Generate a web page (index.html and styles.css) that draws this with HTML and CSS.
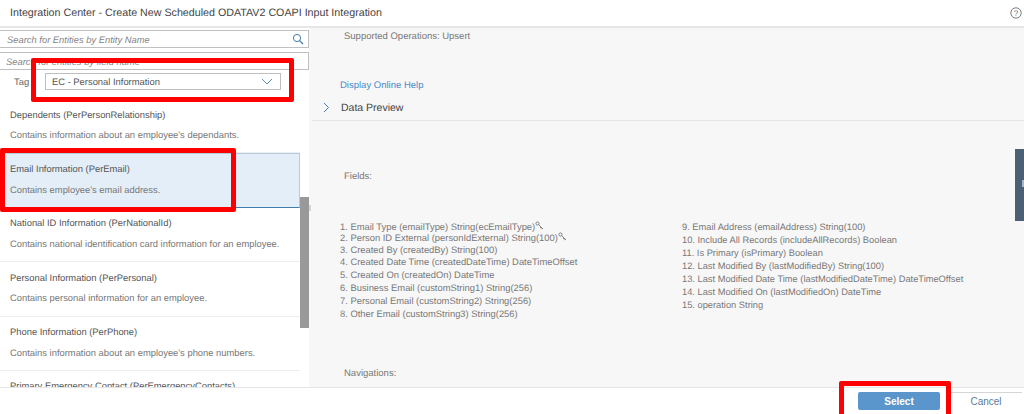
FILE: index.html
```html
<!DOCTYPE html>
<html lang="en">
<head>
<meta charset="utf-8">
<title>Integration Center</title>
<link rel="stylesheet" href="styles.css">
</head>
<body>
<div class="dialog">
  <header class="head">
    <h1 class="title">Integration Center - Create New Scheduled ODATAV2 COAPI Input Integration</h1>
    <svg class="help" width="12" height="12" viewBox="0 0 12 12"><circle cx="6" cy="6" r="5.2" fill="none" stroke="#6a6d70" stroke-width="0.9"/><text x="6" y="8.8" text-anchor="middle" class="help-q">?</text></svg>
  </header>
  <main class="body">
    <aside class="left">
      <div class="search first"><span>Search for Entities by Entity Name</span>
        <svg width="12" height="12" viewBox="0 0 12 12"><circle cx="5" cy="5" r="3.6" fill="none" stroke="#427cac" stroke-width="1"/><path d="M7.6 7.6L11 11" stroke="#427cac" stroke-width="1.3"/></svg>
      </div>
      <div class="search second"><span>Search for entities by field name</span></div>
      <div class="tagrow">
        <label class="tag">Tag</label>
        <div class="select"><span>EC - Personal Information</span>
          <svg width="12" height="7" viewBox="0 0 12 7"><path d="M1 1l5 5 5-5" fill="none" stroke="#427cac" stroke-width="0.9"/></svg>
        </div>
      </div>
      <ul class="list">
        <li class="item"><b>Dependents (PerPersonRelationship)</b><p>Contains information about an employee's dependants.</p></li>
        <li class="item selected"><b>Email Information (PerEmail)</b><p>Contains employee's email address.</p></li>
        <li class="item"><b>National ID Information (PerNationalId)</b><p>Contains national identification card information for an employee.</p></li>
        <li class="item"><b>Personal Information (PerPersonal)</b><p>Contains personal information for an employee.</p></li>
        <li class="item"><b>Phone Information (PerPhone)</b><p>Contains information about an employee's phone numbers.</p></li>
        <li class="item"><b>Primary Emergency Contact (PerEmergencyContacts)</b></li>
      </ul>
      <div class="scrollbar"></div>
    </aside>
    <div class="splitter"></div>
    <section class="right">
      <p class="ops">Supported Operations: Upsert</p>
      <a class="link">Display Online Help</a>
      <div class="preview">
        <svg width="7" height="11" viewBox="0 0 7 11"><path d="M1 1l4.5 4.5L1 10" fill="none" stroke="#427cac" stroke-width="1"/></svg>
        <span>Data Preview</span>
      </div>
      <p class="label fields-label">Fields:</p>
      <div class="fields">
        <ol class="col">
          <li class="tight">1. Email Type (emailType) String(ecEmailType)<svg class="key" width="9" height="9" viewBox="0 0 9 9"><circle cx="2.5" cy="2.5" r="1.6" fill="none" stroke="#777" stroke-width="0.9"/><path d="M3.7 3.7L8 8M6 6l-1 1M7.2 7.2l-1 1" stroke="#777" stroke-width="0.9"/></svg></li>
          <li class="tight">2. Person ID External (personIdExternal) String(100)<svg class="key" width="9" height="9" viewBox="0 0 9 9"><circle cx="2.5" cy="2.5" r="1.6" fill="none" stroke="#777" stroke-width="0.9"/><path d="M3.7 3.7L8 8M6 6l-1 1M7.2 7.2l-1 1" stroke="#777" stroke-width="0.9"/></svg></li>
          <li class="tight">3. Created By (createdBy) String(100)</li>
          <li>4. Created Date Time (createdDateTime) DateTimeOffset</li>
          <li>5. Created On (createdOn) DateTime</li>
          <li>6. Business Email (customString1) String(256)</li>
          <li>7. Personal Email (customString2) String(256)</li>
          <li>8. Other Email (customString3) String(256)</li>
        </ol>
        <ol class="col col-two">
          <li>9. Email Address (emailAddress) String(100)</li>
          <li>10. Include All Records (includeAllRecords) Boolean</li>
          <li>11. Is Primary (isPrimary) Boolean</li>
          <li>12. Last Modified By (lastModifiedBy) String(100)</li>
          <li>13. Last Modified Date Time (lastModifiedDateTime) DateTimeOffset</li>
          <li>14. Last Modified On (lastModifiedOn) DateTime</li>
          <li>15. operation String</li>
        </ol>
      </div>
      <p class="label nav-label">Navigations:</p>
      <div class="side-tab"></div>
    </section>
  </main>
  <footer class="foot">
    <button class="btn primary">Select</button>
    <button class="btn cancel">Cancel</button>
  </footer>
  <div class="mark mark-tag"></div>
  <div class="mark mark-item"></div>
  <div class="mark mark-select"></div>
</div>
</body>
</html>
```
FILE: styles.css
```css
* { box-sizing: border-box; margin: 0; padding: 0; }
html, body { width: 1024px; height: 414px; overflow: hidden; background: #fff; }
body { font-family: "Liberation Sans", Arial, sans-serif; font-size: 10px; color: #666; text-rendering: geometricPrecision; }
.dialog { position: relative; width: 1024px; height: 414px; display: flex; flex-direction: column; }
.head { height: 28px; flex: none; display: flex; align-items: center; justify-content: space-between; padding: 0 2px 0 10px; border-bottom: 2px solid #e6e6e6; }
.title { font-size: 10.7px; font-weight: 400; color: #444; }
.help { display: block; }
.help-q { font-size: 8px; fill: #6a6d70; font-family: "Liberation Sans", sans-serif; }
.body { flex: none; height: 359px; display: flex; overflow: hidden; background: #f7f7f7; }
.left { position: relative; width: 309px; flex: none; background: #fff; display: flex; flex-direction: column; }
.search { height: 18px; border: 1px solid #c0c0c0; border-left: 0; background: #fff; display: flex; align-items: center; justify-content: space-between; padding: 0 4px 0 7px; font-style: italic; color: #858585; font-size: 9.4px; }
.search.first { margin-top: 2px; }
.search.second { margin-top: 4px; padding-left: 6px; }
.tagrow { height: 33px; display: flex; align-items: center; margin-top: -4px; padding: 0 0 2px 14px; }
.tag { width: 31px; font-size: 9.4px; color: #666; }
.select { width: 236px; height: 17px; border: 1px solid #bfbfbf; display: flex; align-items: center; justify-content: space-between; padding: 0 7px 0 6px; color: #555; font-size: 9.4px; }
.list { list-style: none; width: 300px; flex: 1; overflow: hidden; }
.item { height: 54.4px; padding: 9.5px 0 0 10px; border-bottom: 1px solid #eee; }
.item b { display: block; font-weight: 400; font-size: 9.4px; line-height: 12px; color: #555; }
.item p { font-size: 9.4px; line-height: 12px; margin-top: 8.5px; color: #777; }
.item.selected { background: #e3eef8; border: 1px solid #b5cadd; border-bottom-color: #427cac; padding: 9px 0 0 9px; }
.scrollbar { position: absolute; left: 300px; top: 169px; width: 9px; height: 131px; background: #999; }
.splitter { position: relative; width: 3px; flex: none; background: #f7f7f7; }
.splitter::after { content: ""; position: absolute; left: 0; top: 177px; width: 2px; height: 6px; background: #d6d6d6; }
.right { position: relative; flex: 1; padding-left: 28px; }
.ops { margin: 3px 0 0 4px; font-size: 9.5px; line-height: 12px; color: #777; }
.link { display: block; margin-top: 37px; font-size: 9.5px; line-height: 12px; color: #4a8bc9; }
.preview { display: flex; align-items: center; margin: 5px 0 0 -28px; padding: 0 0 2px 11px; height: 24px; border-bottom: 1px solid #e5e5e5; gap: 11px; font-size: 10.5px; color: #444; }
.label { margin-left: 4px; font-size: 9.5px; line-height: 12px; color: #777; }
.fields-label { margin-top: 50px; }
.fields { display: flex; margin-top: 37.5px; }
.col { list-style: none; width: 342px; font-size: 9.4px; color: #777; }
.col-two { font-size: 9.3px; }
.col li { display: flex; height: 13px; line-height: 13px; white-space: nowrap; }
.col li.tight { height: 11.6px; line-height: 12px; }
.key { flex: none; }
.nav-label { margin-top: 47.5px; }
.side-tab { position: absolute; left: 703px; top: 121px; width: 9px; height: 72px; background: #4b6074; }
.side-tab::after { content: ""; position: absolute; left: 7px; top: 31px; width: 2px; height: 7px; background: #a9b6c2; }
.foot { flex: 1; border-top: 1px solid #e5e5e5; display: flex; align-items: flex-end; background: #fff; padding-left: 858px; padding-bottom: 4px; }
.btn { font-family: "Liberation Sans", Arial, sans-serif; font-size: 10px; border: 0; height: 18px; }
.primary { width: 82px; background: #5a96cb; color: #fff; font-weight: 700; border-radius: 2px; }
.cancel { width: 72px; margin-left: 10px; background: #fff; color: #5a7a98; border-top: 1px solid #d5d5d5; }
.mark { position: absolute; border: 5px solid #f00; border-radius: 2px; pointer-events: none; }
.mark-tag { left: 31px; top: 58px; width: 263px; height: 44px; }
.mark-item { left: 0; top: 148px; width: 236px; height: 64px; }
.mark-select { left: 839px; top: 381px; width: 112px; height: 40px; }
```
